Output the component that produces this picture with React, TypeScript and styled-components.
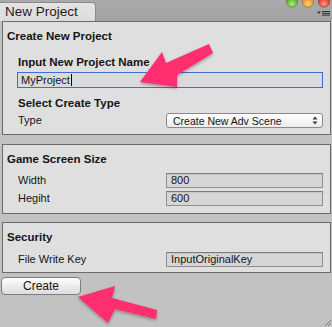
import React from 'react';
import styled, { createGlobalStyle } from 'styled-components';

const GlobalStyle = createGlobalStyle`
  html, body {
    margin: 0;
    padding: 0;
    background: #c2c2c2;
  }
`;

const Window = styled.div`
  position: relative;
  width: 332px;
  height: 327px;
  overflow: hidden;
  background: #c2c2c2;
  font-family: "Liberation Sans", Arial, sans-serif;
  font-size: 11px;
  color: #141414;
`;

const TitleBar = styled.div`
  position: relative;
  display: flex;
  align-items: flex-end;
  height: 21px;
  background: linear-gradient(#aaaaaa, #a2a2a2);
`;

const Tab = styled.div`
  box-sizing: border-box;
  width: 96px;
  height: 19px;
  padding-left: 5px;
  border: 1px solid #8a8a8a;
  border-left: none;
  border-bottom: none;
  border-top-right-radius: 4px;
  background: linear-gradient(#e4e4e4, #dcdcdc);
  font-size: 13.5px;
  line-height: 17px;
  color: #1c1c1c;
`;

const Lights = styled.svg`
  position: absolute;
  top: 0;
  right: 0;
`;

const Body = styled.div`
  display: flex;
  flex-direction: column;
  padding: 0 1px 0 2px;
`;

const Panel = styled.section<{ $top: number; $bottom: number }>`
  box-sizing: border-box;
  margin-top: ${p => p.$top}px;
  padding: 7px 7px ${p => p.$bottom}px 4px;
  border: 1px solid #6a6a6a;
  background: #dfdfdf;
  display: flex;
  flex-direction: column;
`;

const Title = styled.div<{ $indent?: boolean; $gap?: number }>`
  height: 14px;
  line-height: 14px;
  font-weight: bold;
  font-size: 11.5px;
  margin-top: ${p => p.$gap ?? 0}px;
  padding-left: ${p => (p.$indent ? 11 : 0)}px;
`;

const Row = styled.div<{ $gap: number }>`
  display: grid;
  grid-template-columns: 148px 1fr;
  align-items: center;
  height: 15px;
  margin-top: ${p => p.$gap}px;
  padding-left: 11px;
`;

const Label = styled.span`
  line-height: 15px;
`;

const Field = styled.div<{ $focus?: boolean }>`
  box-sizing: border-box;
  height: 15px;
  padding-left: 4px;
  line-height: 13px;
  border: 1px solid ${p => (p.$focus ? '#3f6fd6' : '#8f8f8f')};
  border-top-color: ${p => (p.$focus ? '#3f6fd6' : '#7c7c7c')};
  background: ${p => (p.$focus ? '#dadada' : '#d6d6d6')};
  box-shadow: ${p => (p.$focus ? 'none' : 'inset 0 1px 0 #c6c6c6')};
  white-space: nowrap;
  overflow: hidden;
`;

const NameInput = styled(Field)`
  margin: 3px 0 0 10px;
  height: 16px;
  line-height: 14px;
  padding-left: 3px;
`;

const Caret = styled.span`
  display: inline-block;
  width: 1px;
  height: 12px;
  margin-left: 1px;
  vertical-align: -2px;
  background: #000;
`;

const Select = styled.div`
  box-sizing: border-box;
  display: flex;
  align-items: center;
  justify-content: space-between;
  height: 15px;
  padding: 0 4px 0 6px;
  border: 1px solid #8a8a8a;
  border-radius: 3px;
  background: linear-gradient(#ffffff, #ececec);
  font-size: 10.5px;
`;

const CreateButton = styled.button`
  box-sizing: border-box;
  width: 80px;
  height: 18px;
  margin: 4px 0 0 -1px;
  padding: 0;
  border: 1px solid #7d7d7d;
  border-radius: 4px;
  background: linear-gradient(#ffffff, #e9e9e9 60%, #dedede);
  font-family: "Liberation Sans", Arial, sans-serif;
  font-size: 12px;
  color: #151515;
`;

const Overlay = styled.svg`
  position: absolute;
  left: 0;
  top: 0;
  pointer-events: none;
`;

const Grip = styled.svg`
  position: absolute;
  right: 0;
  bottom: 0;
`;

const UpDown = () => (
  <svg width="6" height="9" viewBox="0 0 6 9">
    <path d="M3 0.5 L5.5 3.5 H0.5 Z M3 8.5 L5.5 5.5 H0.5 Z" fill="#3a3a3a" />
  </svg>
);

export default function App() {
  return (
    <Window>
      <GlobalStyle />
      <TitleBar>
        <Tab>New Project</Tab>
        <Lights width="46" height="18" viewBox="0 0 46 18">
          <defs>
            <radialGradient id="g" cx="0.5" cy="0.7" r="0.6">
              <stop offset="0" stopColor="#b6ec7a" />
              <stop offset="1" stopColor="#3f9a1c" />
            </radialGradient>
            <radialGradient id="o" cx="0.5" cy="0.7" r="0.6">
              <stop offset="0" stopColor="#ffd27a" />
              <stop offset="1" stopColor="#e0801c" />
            </radialGradient>
            <radialGradient id="r" cx="0.5" cy="0.7" r="0.6">
              <stop offset="0" stopColor="#ff9a8a" />
              <stop offset="1" stopColor="#d0281c" />
            </radialGradient>
          </defs>
          <circle cx="6" cy="1.5" r="5.8" fill="url(#g)" stroke="#5f7f4f" strokeWidth="0.6" />
          <circle cx="22" cy="1.5" r="5.8" fill="url(#o)" stroke="#8f6a3a" strokeWidth="0.6" />
          <circle cx="38" cy="1.5" r="5.8" fill="url(#r)" stroke="#8a3a3a" strokeWidth="0.6" />
          <path d="M31 11.5 h4 l-2 2.5 z" fill="#333" />
          <path d="M36 11.5 h8 M36 13.3 h8 M36 15.1 h8" stroke="#333" strokeWidth="1" />
        </Lights>
      </TitleBar>
      <Body>
        <Panel $top={0} $bottom={6}>
          <Title>Create New Project</Title>
          <Title $indent $gap={12}>Input New Project Name</Title>
          <NameInput $focus>
            MyProject<Caret />
          </NameInput>
          <Title $indent $gap={8}>Select Create Type</Title>
          <Row $gap={3}>
            <Label>Type</Label>
            <Select>
              <span>Create New Adv Scene</span>
              <UpDown />
            </Select>
          </Row>
        </Panel>
        <Panel $top={9} $bottom={7}>
          <Title>Game Screen Size</Title>
          <Row $gap={7}>
            <Label>Width</Label>
            <Field>800</Field>
          </Row>
          <Row $gap={3}>
            <Label>Hegiht</Label>
            <Field>600</Field>
          </Row>
        </Panel>
        <Panel $top={8} $bottom={5}>
          <Title>Security</Title>
          <Row $gap={8}>
            <Label>File Write Key</Label>
            <Field>InputOriginalKey</Field>
          </Row>
        </Panel>
        <div>
          <CreateButton>Create</CreateButton>
        </div>
      </Body>
      <Grip width="10" height="10" viewBox="0 0 10 10">
        <path d="M9 3 L3 9 M9 6 L6 9" stroke="#7a7a7a" strokeWidth="1" />
      </Grip>
      <Overlay width="332" height="327" viewBox="0 0 332 327">
        <defs>
          <filter id="sh" x="-20%" y="-20%" width="140%" height="140%">
            <feDropShadow dx="0" dy="1.5" stdDeviation="1.5" floodColor="#000" floodOpacity="0.35" />
          </filter>
        </defs>
        <polygon
          points="140,82 162,52 166,63 209,44 213,53 177,75 177,87"
          fill="#ff2d6e"
          filter="url(#sh)"
        />
        <polygon
          points="78,297 115,286 112,298 157,310 156,319 115,309 108,323"
          fill="#ff2d6e"
          filter="url(#sh)"
        />
      </Overlay>
    </Window>
  );
}
